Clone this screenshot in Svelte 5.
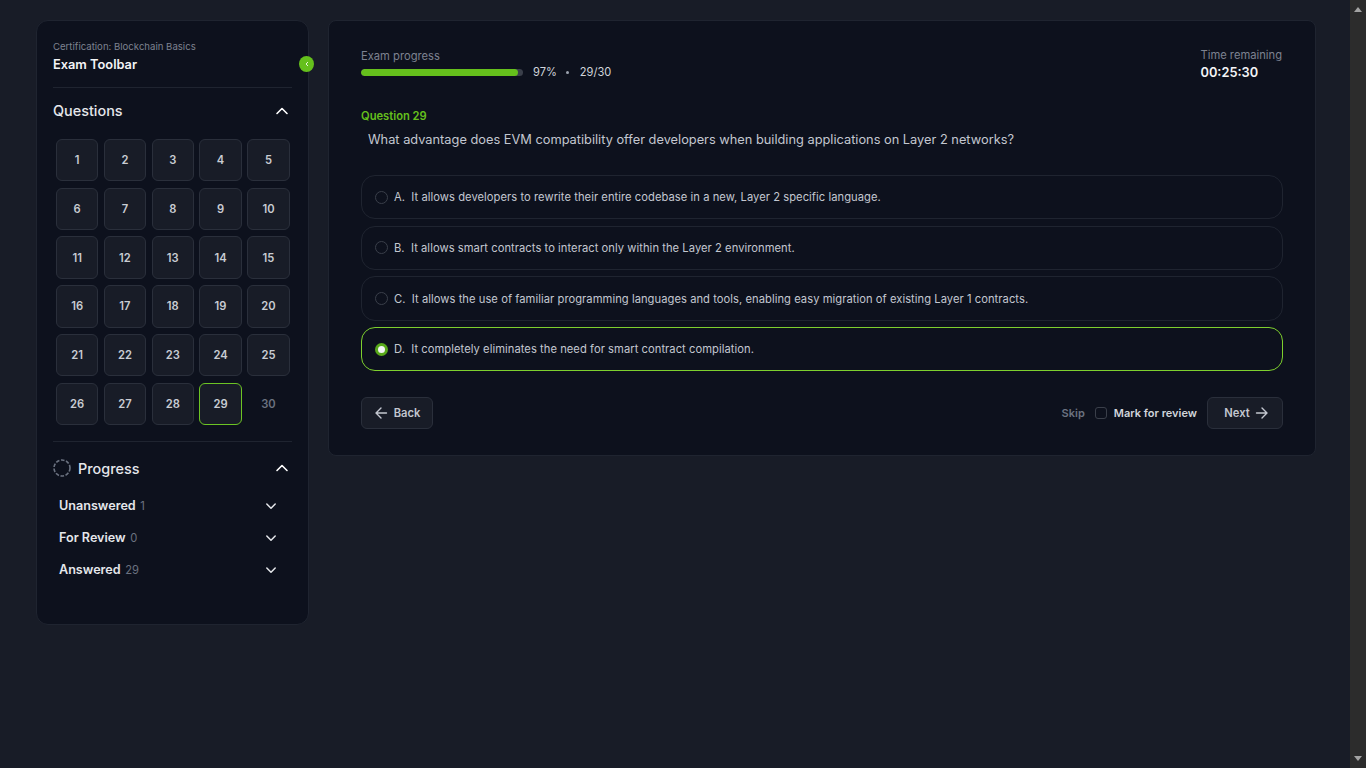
<script>
    const questions = Array.from({ length: 30 }, (_, i) => i + 1);
    const current = 29;
    const unseen = 30;

    const options = [
        { key: 'A', text: 'It allows developers to rewrite their entire codebase in a new, Layer 2 specific language.' },
        { key: 'B', text: 'It allows smart contracts to interact only within the Layer 2 environment.' },
        { key: 'C', text: 'It allows the use of familiar programming languages and tools, enabling easy migration of existing Layer 1 contracts.' },
        { key: 'D', text: 'It completely eliminates the need for smart contract compilation.' }
    ];
    const selected = 'D';

    const groups = [
        { label: 'Unanswered', count: 1 },
        { label: 'For Review', count: 0 },
        { label: 'Answered', count: 29 }
    ];
</script>

<div class="screen">
    <div class="page">
        <aside class="sidebar">
            <div class="side-head">
                <p class="cert">Certification: Blockchain Basics</p>
                <h2 class="toolbar-title">Exam Toolbar</h2>
                <button class="collapse" aria-label="Collapse">
                    <svg width="6" height="6" viewBox="0 0 6 6" fill="none" stroke="#e8f5dc" stroke-width="1"><path d="M4 1 2 3l2 2" /></svg>
                </button>
            </div>

            <div class="section-head questions-head">
                <h3>Questions</h3>
                <svg class="chev" width="16" height="16" viewBox="0 0 16 16" fill="none" stroke="#fff" stroke-width="1.6" stroke-linecap="round" stroke-linejoin="round"><path d="M3 10.5 8 5.5l5 5" /></svg>
            </div>

            <div class="grid">
                {#each questions as q}
                    <button class="cell" class:current={q === current} class:unseen={q === unseen}>{q}</button>
                {/each}
            </div>

            <div class="section-head progress-head">
                <div class="progress-title">
                    <svg width="18" height="18" viewBox="0 0 18 18" fill="none" stroke="#6b7280" stroke-width="1.6" stroke-dasharray="3.6 1.6"><circle cx="9" cy="9" r="8" /></svg>
                    <h3>Progress</h3>
                </div>
                <svg class="chev" width="16" height="16" viewBox="0 0 16 16" fill="none" stroke="#fff" stroke-width="1.6" stroke-linecap="round" stroke-linejoin="round"><path d="M3 10.5 8 5.5l5 5" /></svg>
            </div>

            <ul class="groups">
                {#each groups as g}
                    <li>
                        <span class="group-label">{g.label}</span>
                        <span class="group-count">{g.count}</span>
                        <svg width="14" height="14" viewBox="0 0 14 14" fill="none" stroke="#e5e7eb" stroke-width="1.5" stroke-linecap="round" stroke-linejoin="round"><path d="M2.8 5 7 9.2 11.2 5" /></svg>
                    </li>
                {/each}
            </ul>
        </aside>

        <main class="exam">
            <header class="exam-top">
                <div>
                    <p class="muted-label">Exam progress</p>
                    <div class="progress-row">
                        <div class="bar"><div class="bar-fill" style="width: 97%"></div></div>
                        <span>97%</span>
                        <span class="dot"></span>
                        <span>29/30</span>
                    </div>
                </div>
                <div class="timer">
                    <p class="muted-label">Time remaining</p>
                    <p class="time">00:25:30</p>
                </div>
            </header>

            <p class="q-number">Question 29</p>
            <p class="q-text">What advantage does EVM compatibility offer developers when building applications on Layer 2 networks?</p>

            <div class="options">
                {#each options as o}
                    <label class="option" class:selected={selected === o.key}>
                        <span class="radio"></span>
                        <span class="opt-key">{o.key}.</span>
                        <span>{o.text}</span>
                    </label>
                {/each}
            </div>

            <footer class="actions">
                <button class="btn">
                    <svg width="14" height="14" viewBox="0 0 14 14" fill="none" stroke="currentColor" stroke-width="1.4" stroke-linecap="round" stroke-linejoin="round"><path d="M12.5 7h-10M7 2 2 7l5 5" /></svg>
                    Back
                </button>
                <div class="actions-right">
                    <span class="skip">Skip</span>
                    <span class="checkbox"></span>
                    <span class="mark">Mark for review</span>
                    <button class="btn next">
                        Next
                        <svg width="14" height="14" viewBox="0 0 14 14" fill="none" stroke="currentColor" stroke-width="1.4" stroke-linecap="round" stroke-linejoin="round"><path d="M1.5 7h10M7 2l5 5-5 5" /></svg>
                    </button>
                </div>
            </footer>
        </main>
    </div>

    <div class="scrollbar">
        <span class="arrow up"></span>
        <span class="arrow down"></span>
    </div>
</div>

<style>
    :global(body) {
        margin: 0;
        background-color: #181c27;
        font-family: 'Inter', 'Liberation Sans', sans-serif;
        overflow: hidden;
    }

    p, h2, h3, ul {
        margin: 0;
        padding: 0;
    }

    button {
        font-family: inherit;
    }

    .screen {
        display: flex;
        height: 768px;
    }

    .page {
        flex: 1;
        display: flex;
        align-items: flex-start;
        gap: 19px;
        padding: 20px 34px 0 36px;
    }

    /* Sidebar */
    .sidebar {
        width: 273px;
        height: 605px;
        box-sizing: border-box;
        flex-shrink: 0;
        padding: 20px 16px 0;
        background-color: #0d111d;
        border: 1px solid #1f2430;
        border-radius: 12px;
    }

    .side-head {
        position: relative;
        height: 46px;
        border-bottom: 1px solid #1f2430;
    }

    .cert {
        font-size: 9.6px;
        line-height: 12px;
        color: #7d8290;
    }

    .toolbar-title {
        margin-top: 4px;
        font-size: 12.8px;
        line-height: 16px;
        font-weight: 600;
        color: #f3f4f6;
    }

    .collapse {
        position: absolute;
        top: 15px;
        right: -22px;
        width: 15px;
        height: 16px;
        padding: 0;
        display: flex;
        align-items: center;
        justify-content: center;
        border: none;
        border-radius: 50%;
        background-color: #65c01c;
    }

    .section-head {
        display: flex;
        align-items: center;
        justify-content: space-between;
        height: 46px;
        padding-right: 2px;
    }

    .section-head h3 {
        font-size: 14.4px;
        font-weight: 500;
        color: #e5e7eb;
    }

    .questions-head h3 {
        margin-bottom: 2px;
    }

    .chev {
        display: block;
    }

    .grid {
        display: grid;
        grid-template-columns: repeat(4, 42.35px) 42.7px;
        grid-auto-rows: 42.3px;
        gap: 6.44px 5.45px;
        margin: 5px 0 0 3px;
        padding-bottom: 16px;
    }

    .cell {
        padding: 0;
        font-size: 11.2px;
        font-weight: 600;
        color: #c9ccd3;
        background-color: #181c27;
        border: 1px solid #2a2f3b;
        border-radius: 6px;
    }

    .cell.current {
        border-color: #6cc424;
    }

    .cell.unseen {
        background: none;
        border: none;
        color: #6b7280;
    }

    .progress-head {
        box-sizing: border-box;
        height: 49px;
        padding-top: 5px;
        border-top: 1px solid #1f2430;
    }

    .progress-title {
        display: flex;
        align-items: center;
        gap: 7px;
    }

    .groups {
        list-style: none;
        padding: 0 14px 0 6px;
    }

    .groups li {
        display: flex;
        align-items: center;
        height: 32px;
        gap: 4.5px;
    }

    .group-label {
        font-size: 12.6px;
        font-weight: 600;
        color: #e5e7eb;
    }

    .group-count {
        flex: 1;
        font-size: 11.2px;
        color: #6b7280;
    }

    /* Main card */
    .exam {
        flex: 1;
        height: 436px;
        box-sizing: border-box;
        padding: 28px 32px 0;
        background-color: #0d111d;
        border: 1px solid #1f2430;
        border-radius: 8px;
    }

    .exam-top {
        display: flex;
        justify-content: space-between;
    }

    .muted-label {
        font-size: 11.2px;
        line-height: 15px;
        color: #7d8290;
    }

    .progress-row {
        display: flex;
        align-items: center;
        gap: 10px;
        margin-top: 1px;
        font-size: 11.1px;
        line-height: 14px;
        color: #d1d5db;
    }

    .bar {
        width: 162px;
        height: 7px;
        background-color: #3a3f4a;
        border-radius: 4px;
        overflow: hidden;
    }

    .bar-fill {
        height: 100%;
        background-color: #65c01c;
        border-radius: 4px;
    }

    .dot {
        width: 3px;
        height: 3px;
        margin: 0 1px 0 -1px;
        background-color: #9ca3af;
        border-radius: 50%;
    }

    .timer {
        margin: -1px 1px 0 0;
    }

    .time {
        margin-top: 2px;
        font-size: 12.8px;
        line-height: 16px;
        font-weight: 600;
        color: #f3f4f6;
    }

    .q-number {
        margin-top: 29px;
        font-size: 11.2px;
        line-height: 13px;
        font-weight: 600;
        color: #65c01c;
    }

    .q-text {
        margin-top: 8px;
        padding-left: 7px;
        font-size: 12.8px;
        line-height: 18px;
        color: #c3c7d0;
    }

    .options {
        display: flex;
        flex-direction: column;
        gap: 6.3px;
        margin-top: 26px;
    }

    .option {
        display: flex;
        align-items: center;
        height: 44.4px;
        box-sizing: border-box;
        padding: 0 13px;
        font-size: 11.2px;
        letter-spacing: 0.045px;
        color: #c3c7d0;
        border: 1px solid #1f2430;
        border-radius: 14px;
    }

    .radio {
        width: 13px;
        height: 13px;
        box-sizing: border-box;
        margin-right: 6px;
        border: 1px solid #3a3f4a;
        border-radius: 50%;
    }

    .opt-key {
        margin-right: 6.3px;
    }

    .option.selected {
        border-color: #7ed02e;
    }

    .selected .radio {
        background-color: #f3f4f6;
        border: 3.5px solid #58a81a;
    }

    .actions {
        display: flex;
        align-items: center;
        justify-content: space-between;
        margin-top: 25.6px;
    }

    .actions-right {
        display: flex;
        align-items: center;
        font-size: 11px;
        font-weight: 600;
    }

    .btn {
        display: flex;
        align-items: center;
        justify-content: center;
        gap: 6px;
        width: 72px;
        height: 32px;
        padding: 0;
        font-size: 11.2px;
        font-weight: 600;
        color: #c3c7d0;
        background-color: #181c27;
        border: 1px solid #2a2f3b;
        border-radius: 6px;
    }

    .btn.next {
        width: 76px;
        margin-left: 10px;
        padding-left: 3px;
        gap: 5px;
    }

    .skip {
        color: #6b7280;
    }

    .checkbox {
        width: 12px;
        height: 12px;
        box-sizing: border-box;
        margin: 0 7px 0 10px;
        border: 1px solid #3a3f4a;
        border-radius: 3px;
    }

    .mark {
        color: #d1d5db;
    }

    /* Browser scrollbar */
    .scrollbar {
        width: 16px;
        flex-shrink: 0;
        display: flex;
        flex-direction: column;
        justify-content: space-between;
        align-items: center;
        padding: 7px 0;
        box-sizing: border-box;
        background-color: #2c2c2c;
    }

    .arrow {
        width: 0;
        height: 0;
        border-left: 4.5px solid transparent;
        border-right: 4.5px solid transparent;
    }

    .arrow.up {
        border-bottom: 5px solid #a3a3a3;
    }

    .arrow.down {
        border-top: 5px solid #a3a3a3;
    }
</style>
